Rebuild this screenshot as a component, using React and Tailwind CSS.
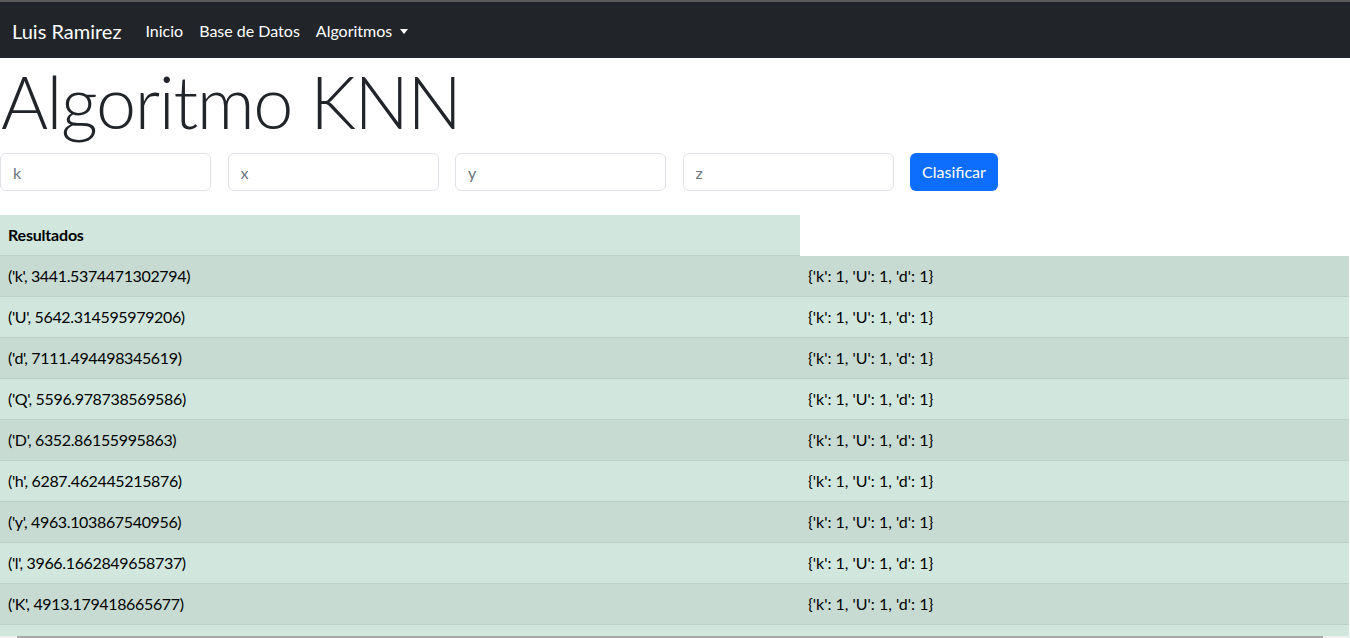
import React from "react";

const rows = [
  "('k', 3441.5374471302794)",
  "('U', 5642.314595979206)",
  "('d', 7111.494498345619)",
  "('Q', 5596.978738569586)",
  "('D', 6352.86155995863)",
  "('h', 6287.462445215876)",
  "('y', 4963.103867540956)",
  "('l', 3966.1662849658737)",
  "('K', 4913.179418665677)",
  "('p', 5210.448213379015)",
];

export default function App() {
  const font = { fontFamily: "Lato, 'Open Sans', sans-serif" };
  return (
    <div className="h-[638px] w-[1350px] overflow-hidden flex flex-col bg-white text-[#212529]" style={font}>
      <nav className="h-[58px] shrink-0 border-t-2 border-[#5a5a5a] bg-[#212529] flex items-center px-3 pt-[2px]">
        <a className="text-[20px] leading-[30px] text-white mr-4">Luis Ramirez</a>
        <a className="text-[16px] leading-6 text-white px-2">Inicio</a>
        <a className="text-[16px] leading-6 text-white px-2">Base de Datos</a>
        <a className="text-[16px] leading-6 text-white px-2 flex items-center">
          Algoritmos
          <span className="ml-[8px] mt-[1px] w-0 h-0 border-t-[5px] border-t-white border-x-[4.5px] border-x-transparent"></span>
        </a>
      </nav>
      <h1 className="text-[72px] leading-[87px] font-light mb-2 pl-[1px] tracking-[-1.4px]">Algoritmo KNN</h1>
      <form className="flex items-center gap-[16.5px]">
        {["k", "x", "y", "z"].map((p) => (
          <input
            key={p}
            placeholder={p}
            className="w-[211px] h-[38px] border border-[#dee2e6] rounded-[6px] px-3 text-[16px] placeholder:text-[#6c757d] outline-none"
            style={font}
          />
        ))}
        <button type="button" className="h-[38px] w-[88px] bg-[#0d6efd] text-white rounded-[6px] text-[16px]" style={font}>
          Clasificar
        </button>
      </form>
      <div className="mt-6 flex-1 overflow-hidden">
        <table className="w-[1349px] border-separate border-spacing-0 text-[16px] leading-6 text-black">
          <thead>
            <tr>
              <th className="w-[800px] h-[41px] bg-[#d1e7dd] text-left px-2 py-2 border-b border-[#bcd0c7] font-bold tracking-[-0.2px]">Resultados</th>
            </tr>
          </thead>
          <tbody>
            {rows.map((r, i) => (
              <tr key={i} className={i % 2 === 0 ? "bg-[#c7dbd2]" : "bg-[#d1e7dd]"}>
                <td className="w-[800px] h-[41px] px-2 py-2 border-b border-[#bcd0c7] tracking-[-0.35px]">{r}</td>
                <td className="h-[41px] px-2 py-2 border-b border-[#bcd0c7]">{"{'k': 1, 'U': 1, 'd': 1}"}</td>
              </tr>
            ))}
          </tbody>
        </table>
      </div>
      <div className="h-[2px] shrink-0 bg-[#f0f0f0] flex">
        <div className="ml-[17px] w-[1306px] bg-[#a8a8a8]"></div>
      </div>
    </div>
  );
}
